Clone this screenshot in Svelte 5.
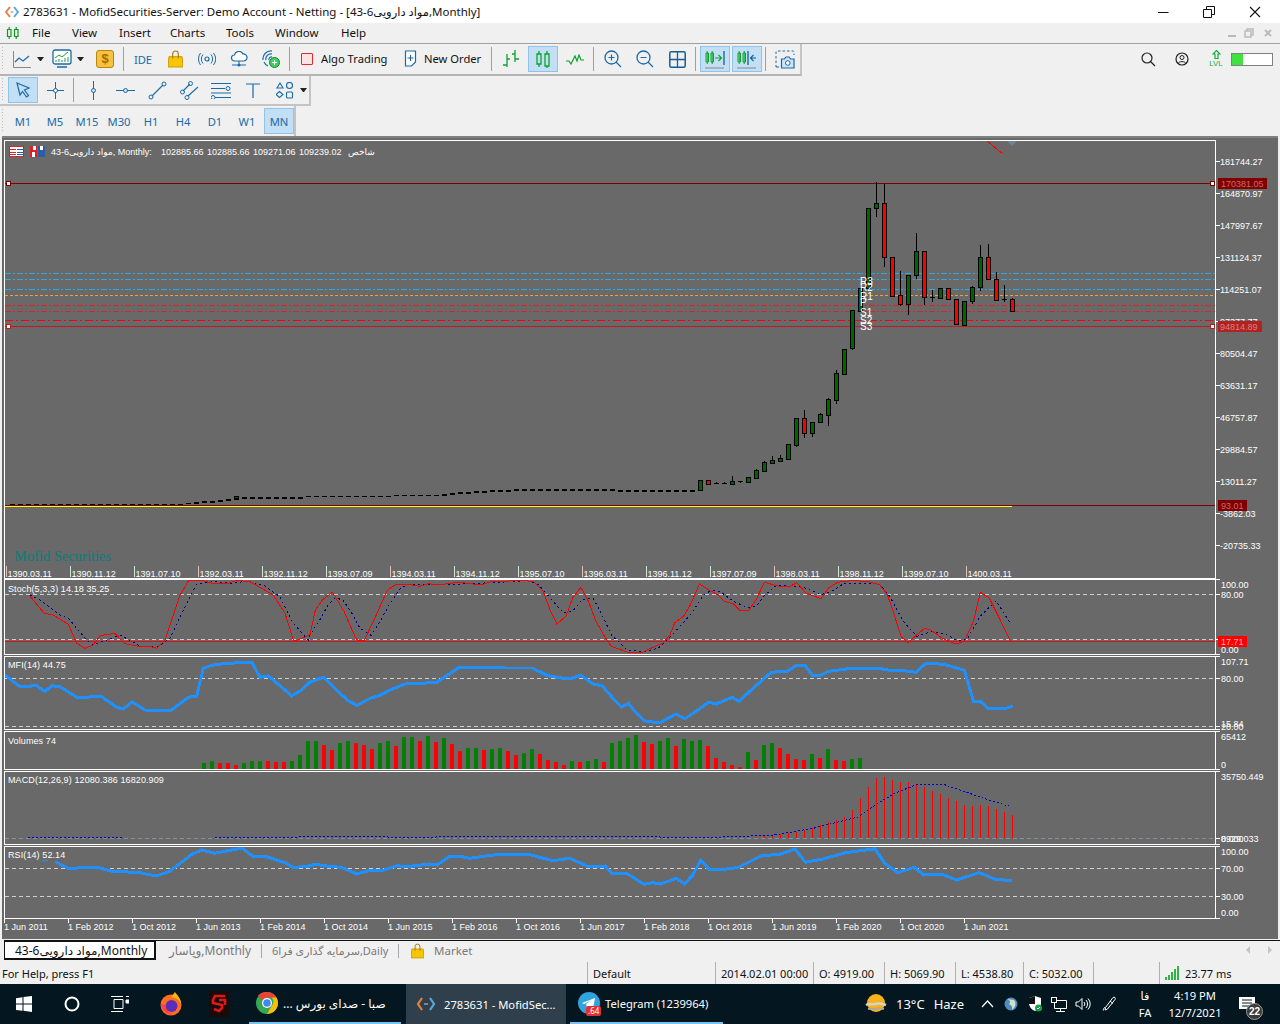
<script>
  const z3 = (a) => a.map(([x, y]) => `${(x / 3).toFixed(1)},${(490 + y / 3).toFixed(1)}`);
  const z11 = (a) => a.map(([x, y]) => `${(310 + x / 2.208).toFixed(1)},${(578 + y / 3).toFixed(1)}`);
  const z12 = (a) => a.map(([x, y]) => `${(x / 1.537).toFixed(1)},${(730 + y / 3).toFixed(1)}`);

  const stochMain = [...z3([[88,316],[133,370],[160,375],[205,403],[230,460],[255,475],[280,465],[300,437],[345,430],[372,460],[420,470],[445,468],[470,475],[495,450],[517,385],[540,316],[565,273],[610,272],[635,280],[680,281],[710,271],[750,275],[820,315],[855,370],[880,450],[890,452],[905,445]]),
    ...z11([[0,170],[12,95],[28,65],[50,43],[75,100],[100,178],[105,187],[120,187],[140,130],[170,38],[190,18],[220,20],[243,25],[260,17],[285,20],[330,13],[360,18],[385,18],[400,11],[430,10],[470,7],[495,12],[515,40],[530,95],[545,138],[565,115],[580,60],[598,28],[615,70],[630,125],[650,175],[665,205],[700,222],[735,222],[765,203],[780,195],[795,170],[805,135],[825,115],[840,80],[860,18],[880,35],[900,50],[915,70],[935,78],[950,98],[968,98],[985,65],[1003,13],[1035,25],[1060,25],[1075,14],[1095,45],[1128,62],[1145,30],[1165,13],[1195,8],[1230,10],[1258,20],[1275,50],[1290,110],[1305,175],[1320,195],[1340,170],[1358,150],[1375,160],[1395,180],[1425,198],[1445,190],[1465,130],[1480,43],[1500,60],[1520,115],[1548,193]])].join(' ');
  const stochSig = [...z3([[90,315],[120,330],[180,375],[205,385],[260,450],[280,465],[360,435],[420,468],[470,472],[510,445],[540,380],[590,282],[640,275],[700,280],[740,273],[790,285],[840,320],[880,400],[925,450]]),
    ...z11([[0,170],[20,130],[40,80],[55,60],[72,65],[90,100],[110,150],[135,172],[155,130],[175,80],[200,30],[215,20],[300,20],[400,14],[480,8],[505,20],[530,60],[560,105],[580,100],[600,65],[625,60],[645,110],[665,170],[700,215],[735,222],[770,210],[800,170],[840,110],[870,50],[885,38],[905,40],[935,70],[965,88],[985,85],[1005,50],[1030,22],[1090,28],[1128,50],[1150,42],[1180,15],[1255,15],[1280,55],[1310,130],[1340,175],[1375,160],[1405,170],[1430,188],[1450,185],[1480,115],[1515,68],[1548,140]])].join(' ');
  const mfi = [...z3([[15,555],[60,590],[110,587],[135,605],[155,587],[180,590],[230,622],[305,620],[350,652],[370,657],[397,636],[435,660],[515,660],[565,622],[590,618],[610,535],[640,525],[680,520],[755,517],[780,562],[805,557],[875,617],[905,600]]),
    ...z11([[0,312],[30,298],[65,345],[85,368],[103,382],[135,360],[155,352],[175,337],[210,318],[245,316],[280,313],[330,268],[430,270],[490,270],[525,293],[555,300],[580,300],[598,292],[625,318],[645,323],[665,355],[688,388],[703,376],[720,405],[738,428],[772,435],[808,408],[828,422],[850,402],[880,373],[897,378],[932,358],[947,370],[975,335],[1018,283],[1055,279],[1075,261],[1092,261],[1110,293],[1128,291],[1145,280],[1190,272],[1260,272],[1280,277],[1310,278],[1338,283],[1360,256],[1400,259],[1445,277],[1465,370],[1480,370],[1498,392],[1535,392],[1552,384]])].join(' ');
  const rsi = z12([[85,395],[105,415],[150,412],[170,423],[215,428],[240,438],[260,425],[280,395],[295,373],[310,360],[330,370],[372,354],[388,378],[410,380],[440,400],[450,412],[470,410],[485,403],[510,410],[525,412],[548,432],[565,423],[590,420],[610,407],[625,410],[660,402],[672,405],[690,380],[705,378],[722,385],[770,372],[810,372],[850,392],[875,385],[905,410],[930,408],[940,430],[965,432],[990,463],[1003,458],[1015,462],[1040,445],[1052,462],[1065,435],[1077,390],[1090,418],[1115,418],[1135,412],[1170,378],[1200,372],[1222,357],[1238,397],[1265,387],[1300,368],[1345,356],[1360,400],[1380,428],[1405,412],[1420,435],[1448,433],[1470,450],[1505,428],[1530,448],[1555,452]]).join(' ');
  const macdSig = z12([[330,322],[590,320],[610,323],[730,319],[1010,320],[1020,322],[1100,322],[1190,315],[1250,295],[1320,260],[1345,225],[1375,190],[1410,163],[1450,163],[1490,190],[1520,210],[1550,228]]).join(' ');

  const candles = [
    [480,490,480,490,'g'],[480,484,480,485,'r'],[483,484,482,484,'d'],[483,484,482,484,'d'],[481,484,476,484,'g'],[481,482,481,483,'d'],
    [477,482,477,482,'g'],[470,478,469,478,'g'],[462,471,461,472,'g'],[460,463,456,463,'g'],[458,461,455,461,'g'],[444,459,444,459,'g'],
    [418,445,418,447,'g'],[418,433,410,438,'r'],[422,433,422,437,'g'],[414,422,413,422,'g'],[399,415,398,426,'g'],[373,400,370,404,'g'],
    [349,374,349,374,'g'],[310,348,310,350,'g'],[288,311,288,311,'g'],[208,288,208,288,'g'],[203,208,182,217,'g'],[203,257,184,267,'r'],
    [257,296,257,296,'r'],[295,304,271,306,'r'],[275,304,275,315,'g'],[251,275,233,279,'g'],[251,297,251,305,'r'],[297,298,290,302,'d'],
    [288,298,288,299,'g'],[288,299,288,299,'r'],[299,324,299,324,'r'],[301,325,301,325,'g'],[287,301,286,304,'g'],[257,287,245,291,'g'],
    [257,279,244,279,'r'],[279,300,272,300,'r'],[299,300,285,302,'d'],[299,311,298,311,'r']
  ].map((c, i) => ({ x: 700 + i * 8, top: c[0], bot: c[1], hi: c[2], lo: c[3], k: c[4] }));

  const curve = [[12,503.5],[185,503.5],[200,501.5],[230,499],[250,496.5],[300,496.5],[440,495],[450,493],[500,490],[520,489],[580,488.5],[620,489.5],[684,490]];
  const dashY = (x) => {
    for (let i = 1; i < curve.length; i++) {
      if (x <= curve[i][0]) {
        const [a, b] = [curve[i - 1], curve[i]];
        return Math.round(a[1] + ((b[1] - a[1]) * (x - a[0])) / (b[0] - a[0]));
      }
    }
    return 490;
  };
  const flat = [];
  for (let x = 12; x <= 692; x += 8) flat.push({ x, y: dashY(x), h: x < 190 || (x > 300 && x < 440) ? 1 : 2 });

  const priceLabels = ['181744.27','164870.97','147997.67','131124.37','114251.07','97377.77','80504.47','63631.17','46757.87','29884.57','13011.27','-3862.03','-20735.33']
    .map((t, i) => ({ t, y: 161 + i * 32 }));
  const paneLabels = [
    ['100.00',584],['80.00',594],['0.00',649],['107.71',661],['80.00',678],['15.84',723],['20.00',726],
    ['65412',736],['0',764],['35750.449',776],['0.000',838],['8929.033',838],['100.00',851],['70.00',868],['30.00',896],['0.00',912]
  ].map(([t, y]) => ({ t, y }));

  const topDates = ['1390.03.11','1390.11.12','1391.07.10','1392.03.11','1392.11.12','1393.07.09','1394.03.11','1394.11.12','1395.07.10','1396.03.11','1396.11.12','1397.07.09','1398.03.11','1398.11.12','1399.07.10','1400.03.11'];
  const botDates = ['1 Jun 2011','1 Feb 2012','1 Oct 2012','1 Jun 2013','1 Feb 2014','1 Oct 2014','1 Jun 2015','1 Feb 2016','1 Oct 2016','1 Jun 2017','1 Feb 2018','1 Oct 2018','1 Jun 2019','1 Feb 2020','1 Oct 2020','1 Jun 2021'];

  const panes = [[140,578],[579,654],[656,729],[731,769],[771,844],[846,918]];
  const ticks = [161,193,225,257,289,321,353,385,417,449,481,513,545,579,594,639,654,656,678,726,729,731,769,771,838,844,846,868,896,918];

  const pivots = [
    [273.5,'#29abe2','6 2 2 2'],[279.5,'#29abe2','6 2 2 2'],[289.5,'#29abe2','6 2 2 2'],
    [295.5,'#e8a33d','3 2'],[305.5,'#e02020','6 2 2 2'],[311.5,'#e02020','6 2 2 2'],[320.5,'#ff0000','8 3 2 3']
  ].map(([y, c, d]) => ({ y, c, d }));
  const pivotText = [['R3',285],['R2',291],['R1',300],['P',306],['S1',316],['S2',324],['S3',330]];

  const volRaw = 'G99 G93 R99 R99 R105 G99 G93 G93 R93 R96 R96 G93 G75 G33 G33 R45 R60 G39 G33 R39 R45 R57 G39 G33 R48 G21 G21 R33 G18 R36 G24 R42 R63 G54 G54 R60 G57 G54 R63 R75 G69 G57 R72 R90 R96 R105 G93 R96 G93 G87 R96 G39 G33 G24 G15 R36 R42 G33 G24 R48 G27 G33 G30 R48 R84 R96 R105 R111 G66 R90 G45 G39 R54 R72 R87 R90 G72 R84 G57 R90 R93 G87 G84';
  const volumes = volRaw.split(' ').map((s, i) => ({ x: 202 + i * 8, up: s[0] === 'G', top: 730 + Number(s.slice(1)) / 3 }));

  const macdTops = [[748,838],[756,837],[764,836],[772,835],[780,834],[788,833],[796,832],[804,830],[812,828],[820,825],[828,822],[836,820],[844,817],[852,810],[860,798],[868,787],[876,778],[884,777],[892,780],[900,782],[908,782],[916,784],[924,787],[932,791],[940,794],[948,798],[956,801],[964,805],[972,806],[980,805],[988,806],[996,809],[1004,812],[1012,815]]
    .map(([x, y]) => ({ x, y }));

  const menus = [['File',40],['View',47],['Insert',51],['Charts',56],['Tools',49],['Window',66],['Help',40]];
  const periods = ['M1','M5','M15','M30','H1','H4','D1','W1'];
  const arabicTab = 'مواد دارویی6-43,Monthly';
</script>

{#snippet bag(w, h)}
  <svg width={w} height={h} viewBox="0 0 16 19"><path d="M1 7h14l1 11H0z" fill="#f7c600" stroke="#c89400"/><path d="M5 9V4a3 3 0 0 1 6 0v5" fill="none" stroke="#a87b00" stroke-width="1.2"/></svg>
{/snippet}

<div class="app">
  <header class="title">
    <svg width="14" height="12" viewBox="0 0 14 12"><path d="M5 1 1 6l4 5" fill="none" stroke="#e8803a" stroke-width="2"/><path d="M9 1l4 5-4 5" fill="none" stroke="#5aa8d8" stroke-width="2"/><path d="M5.5 6h3" stroke="#aab" stroke-width="1.5"/></svg>
    <span class="ttext">2783631 - MofidSecurities-Server: Demo Account - Netting - [مواد دارویی6-43,Monthly]</span>
    <span class="grow"></span>
    <span class="wbtn"><svg width="12" height="12"><path d="M1 6.5h10.5" stroke="#111"/></svg></span>
    <span class="wbtn"><svg width="12" height="12"><path d="M.5 3.5h8v8h-8zM3.5 3V.5h8v8H9" fill="none" stroke="#111"/></svg></span>
    <span class="wbtn"><svg width="12" height="12"><path d="M1 1l10 10M11 1 1 11" stroke="#111" stroke-width="1.1"/></svg></span>
  </header>

  <nav class="menu">
    <svg class="mlogo" width="14" height="14" viewBox="0 0 14 14"><path d="M1.5 3.5h3.5v7H1.5zM8.5 3.5H12v7H8.5zM3.2 1v2.5M3.2 10.500V13M10.200 1v2.500M10.200 10.500V13" fill="none" stroke="#0a9b22" stroke-width="1.2"/></svg>
    {#each menus as [m, w]}<span class="mi" style:width="{w}px">{m}</span>{/each}
    <span class="grow"></span>
    <svg class="mdi" width="46" height="10" viewBox="0 0 46 10"><path d="M1 8h8" stroke="#bbb" stroke-width="2"/><path d="M18 3h6v6h-6zM20 3V1h6v6h-2" fill="none" stroke="#bbb" stroke-width="1.500"/><path d="M38 2l6 6M44 2l-6 6" stroke="#bbb" stroke-width="2"/></svg>
  </nav>

  <div class="toolbars">
    <div class="row r1">
      <span class="grip"></span>
      <span class="b"><svg width="18" height="17" viewBox="0 0 18 17"><path d="M.5 0v16.500H18" fill="none" stroke="#888"/><path d="M2 11l4-4 4 3 6-5" fill="none" stroke="#1a6aa8" stroke-width="1.200"/></svg></span>
      <span class="caret"></span>
      <span class="b ml3"><svg width="20" height="20" viewBox="0 0 20 20"><rect x="1" y="1" width="18" height="14" rx="2" fill="#fff" stroke="#1a6aa8" stroke-width="1.300"/><path d="M3 9l4-3 3 2 6-5" fill="none" stroke="#1a9b3c"/><path d="M4 13v-2M7 13v-3M10 13v-2M13 13V9M16 13V8" stroke="#1a9b3c"/><path d="M5 18h10" stroke="#1a6aa8" stroke-width="1.500"/></svg></span>
      <span class="caret"></span>
      <span class="b ml6"><span class="dollar">$</span></span>
      <span class="sep"></span>
      <span class="b ide">IDE</span>
      <span class="b">{@render bag(15, 18)}</span>
      <span class="b"><svg width="18" height="14" viewBox="0 0 18 14"><circle cx="9" cy="7" r="2" fill="none" stroke="#1a6aa8" stroke-width="1.200"/><path d="M5 2.500a7 7 0 0 0 0 9M13 2.500a7 7 0 0 1 0 9M2.500 1a10 10 0 0 0 0 12M15.500 1a10 10 0 0 1 0 12" fill="none" stroke="#1a6aa8"/></svg></span>
      <span class="b"><svg width="18" height="16" viewBox="0 0 18 16"><path d="M4.500 10a3 3 0 0 1 0-6 4.500 4.500 0 0 1 8.500-1 3.500 3.500 0 0 1 1 7z" fill="#fff" stroke="#1a6aa8" stroke-width="1.200"/><path d="M9 10v3M2 14h14" stroke="#1a6aa8"/><circle cx="9" cy="14" r="1.500" fill="#1a6aa8"/></svg></span>
      <span class="b"><svg width="18" height="18" viewBox="0 0 18 18"><path d="M10 1a8 8 0 0 0-9 9M10 4a5 5 0 0 0-6 6M10 7a2.500 2.500 0 0 0-3 3M2 12a8 8 0 0 0 4 4" fill="none" stroke="#1a6aa8" stroke-width="1.200"/><circle cx="12.500" cy="12.500" r="5" fill="#3ecf5c" stroke="#0a8a2a"/><path d="M12.500 10v5M10 12.500h5" stroke="#fff"/></svg></span>
      <span class="sep"></span>
      <span class="tx algo"><span class="chk"></span>Algo Trading</span>
      <span class="tx neword"><svg width="13" height="17" viewBox="0 0 13 17"><path d="M1.500 1h10v11l-4 4h-6z" fill="#fff" stroke="#1a6aa8" stroke-width="1.200"/><path d="M6.500 5v6M3.500 8h6" stroke="#1a6aa8" stroke-width="1.200"/></svg>New Order</span>
      <span class="sep"></span>
      <span class="b"><svg width="18" height="18" viewBox="0 0 18 18"><path d="M5 4v13M1 15h4M5 9h3M13 0v12M13 4h-3M13 9h4" fill="none" stroke="#0aa52a" stroke-width="1.300"/></svg></span>
      <span class="b on"><svg width="14" height="18" viewBox="0 0 14 18"><path d="M1 4h4v10H1zM9 4h4v12H9zM3 1v3M3 14v3M11 1v3M11 16v2" fill="none" stroke="#0aa52a" stroke-width="1.300"/></svg></span>
      <span class="b"><svg width="18" height="11" viewBox="0 0 18 11"><path d="M0 7h3l2 3 4-8 2 5 2-6 2 5h3" fill="none" stroke="#0aa52a" stroke-width="1.200"/></svg></span>
      <span class="sep"></span>
      <span class="b"><svg width="18" height="18" viewBox="0 0 18 18"><circle cx="7.500" cy="7.500" r="6.500" fill="none" stroke="#1a6aa8" stroke-width="1.300"/><path d="M12 12l5 5M4.500 7.500h6M7.500 4.500v6" stroke="#1a6aa8" stroke-width="1.200"/></svg></span>
      <span class="b"><svg width="18" height="18" viewBox="0 0 18 18"><circle cx="7.500" cy="7.500" r="6.500" fill="none" stroke="#1a6aa8" stroke-width="1.300"/><path d="M12 12l5 5M4.500 7.500h6" stroke="#1a6aa8" stroke-width="1.200"/></svg></span>
      <span class="b"><svg width="17" height="17" viewBox="0 0 17 17"><rect x=".8" y=".8" width="15.400" height="15.400" rx="1.500" fill="none" stroke="#155f96" stroke-width="1.500"/><path d="M8.500 1v15M1 8.500h15" stroke="#155f96" stroke-width="1.300"/></svg></span>
      <span class="sep"></span>
      <span class="b on"><svg width="20" height="19" viewBox="0 0 20 19"><path d="M1 3h2.500v9H1zM6 3h2.500v9H6zM2.200 1v13M7.200 1v13" fill="none" stroke="#0aa52a"/><path d="M10 8h6M13.500 5l3 3-3 3" fill="none" stroke="#0aa52a" stroke-width="1.100"/><path d="M19 1v14" stroke="#155f96" stroke-width="1.300"/><path d="M0 18h19" stroke="#888"/></svg></span>
      <span class="b on"><svg width="20" height="19" viewBox="0 0 20 19"><path d="M1 3h2.500v9H1zM6 3h2.500v9H6zM2.200 1v13M7.200 1v13" fill="none" stroke="#0aa52a"/><path d="M11 1v14" stroke="#155f96" stroke-width="1.300"/><path d="M19 8h-5M16.500 5l-3 3 3 3" fill="none" stroke="#155f96" stroke-width="1.100"/><path d="M0 18h19" stroke="#888"/></svg></span>
      <span class="sep"></span>
      <span class="b"><svg width="20" height="19" viewBox="0 0 20 19"><path d="M1 13V2a1 1 0 0 1 1-1h16a1 1 0 0 1 1 1v3" fill="none" stroke="#1a6aa8" stroke-dasharray="2.500 2"/><path d="M1 15v2h3" fill="none" stroke="#1a6aa8"/><path d="M6.500 9h3l1.500-2h3l1.500 2H19v9H6.500z" fill="#cfe4f5" stroke="#1a6aa8" stroke-width="1.200"/><circle cx="12.800" cy="13" r="2.300" fill="#fff" stroke="#1a6aa8"/></svg></span>
    </div>
    <div class="rightbox">
      <svg width="15" height="15" viewBox="0 0 15 15"><circle cx="6" cy="6" r="5" fill="none" stroke="#222" stroke-width="1.200"/><path d="M9.500 9.500 14 14" stroke="#222" stroke-width="1.300"/></svg>
      <svg class="user" width="14" height="14" viewBox="0 0 14 14"><circle cx="7" cy="7" r="6" fill="none" stroke="#222" stroke-width="1.200"/><circle cx="7" cy="5.500" r="2" fill="none" stroke="#222"/><path d="M3 11.500c1-2.500 7-2.500 8 0" fill="none" stroke="#222"/></svg>
      <span class="lvl">
        <svg width="9" height="9" viewBox="0 0 9 9"><path d="M4.500.5 8 4H6v4.500H3V4H1z" fill="none" stroke="#12b03a" stroke-width="1.200"/></svg>
        <span class="lvlt">LVL</span>
      </span>
      <span class="level"><span class="fill"></span></span>
    </div>

    <div class="row r2">
      <span class="grip"></span>
      <span class="b on ml1"><svg width="15" height="16" viewBox="0 0 15 16"><path d="M1 1l12 5-4.500 2 4 5.500-2 1.500L6.500 9.500 4 13z" fill="none" stroke="#1a6aa8" stroke-width="1.200"/></svg></span>
      <span class="b"><svg width="17" height="17" viewBox="0 0 17 17"><path d="M8.500 0v17M0 8.500h17" stroke="#1a6aa8"/><circle cx="8.500" cy="8.500" r="2" fill="#f0f0f0" stroke="#1a6aa8"/></svg></span>
      <span class="sep"></span>
      <span class="b"><svg width="5" height="19" viewBox="0 0 5 19"><path d="M2.500 0v19" stroke="#1a6aa8"/><circle cx="2.500" cy="9.500" r="2" fill="#cfe4f5" stroke="#1a6aa8"/></svg></span>
      <span class="b"><svg width="19" height="5" viewBox="0 0 19 5"><path d="M0 2.500h19" stroke="#1a6aa8"/><circle cx="9.500" cy="2.500" r="2" fill="#cfe4f5" stroke="#1a6aa8"/></svg></span>
      <span class="b"><svg width="19" height="19" viewBox="0 0 19 19"><path d="M4 15 15 4" stroke="#1a6aa8" stroke-width="1.100"/><circle cx="3" cy="16" r="2" fill="none" stroke="#1a6aa8"/><circle cx="16" cy="3" r="2" fill="none" stroke="#1a6aa8"/></svg></span>
      <span class="b"><svg width="19" height="19" viewBox="0 0 19 19"><path d="M3 10l7-7M8 15l10-9" stroke="#1a6aa8" stroke-width="1.100"/><circle cx="2.500" cy="11" r="2" fill="none" stroke="#1a6aa8"/><circle cx="10.500" cy="2.500" r="2" fill="none" stroke="#1a6aa8"/><circle cx="7" cy="16.500" r="2" fill="none" stroke="#1a6aa8"/></svg></span>
      <span class="b"><svg width="20" height="17" viewBox="0 0 20 17"><path d="M0 1.500h20M0 6.500h14M0 11h20M4 15.500h16" stroke="#1a6aa8" stroke-width="1.200"/><circle cx="17" cy="6.500" r="2" fill="none" stroke="#1a6aa8"/><circle cx="2" cy="15.500" r="2" fill="none" stroke="#1a6aa8"/></svg></span>
      <span class="b"><svg width="14" height="15" viewBox="0 0 14 15"><path d="M0 1h14M7 1v14" stroke="#1a6aa8" stroke-width="1.200"/></svg></span>
      <span class="b"><svg width="18" height="17" viewBox="0 0 18 17"><path d="M4 1l3 5H1zM3.500 9.500l3.500 3-3.500 3L0 12.500z" fill="none" stroke="#1a6aa8" stroke-width="1.100"/><circle cx="13.500" cy="3.500" r="3" fill="none" stroke="#1a6aa8" stroke-width="1.100"/><rect x="10.500" y="10" width="6" height="6" rx="1" fill="none" stroke="#1a6aa8" stroke-width="1.100"/></svg></span>
      <span class="caret"></span>
    </div>

    <div class="row r3">
      <span class="grip"></span>
      <span class="p ml1">{periods[0]}</span>
      {#each periods.slice(1) as p}<span class="p">{p}</span>{/each}
      <span class="p on">MN</span>
    </div>
  </div>

  <main class="chartarea">
    <svg class="chart" width="1276" height="803" viewBox="2 136 1276 803">
      <rect x="2" y="136" width="1276" height="803" fill="#696969"/>
      <path d="M2 136.500h1276" stroke="#808080" stroke-width="2" class="cr"/>

      {#each [594.5,639.5,678.5,726.5,868.5,896.5] as y}
        <path d="M5 {y}H1215" stroke="#cfcfcf" stroke-dasharray="4 3" class="cr"/>
      {/each}
      <path d="M5 838.500H1215" stroke="#7f93a8" stroke-dasharray="4 3" class="cr"/>
      {#each pivots as l}
        <path d="M5 {l.y}H1215" stroke={l.c} stroke-dasharray={l.d} class="cr"/>
      {/each}
      <path d="M5 183.500H1215" stroke="#800000" class="cr"/>
      <path d="M5 326.500H1215" stroke="#b22222" class="cr"/>
      <path d="M5 505.500H1215" stroke="#800000" class="cr"/>
      <path d="M5 506.500H1012" stroke="#ffff00" stroke-width="1.500" class="cr"/>
      <path d="M5 641.500H1215" stroke="#e01010" class="cr"/>

      <polyline points="987,141 1003,154" fill="none" stroke="#ff0000" class="cr"/>
      <path d="M1007 141h10l-5 5z" fill="#6f8297"/>

      {#each flat as d}
        <rect x={d.x - 2} y={d.y} width="5" height={d.h} fill="#000" class="cr"/>
      {/each}
      <rect x="234.500" y="496.500" width="4" height="2" fill="#006400" stroke="#000" class="cr"/>
      {#each candles as c}
        <path d="M{c.x + 0.5} {c.hi}V{c.lo}" stroke="#000" class="cr"/>
        {#if c.k === 'd'}
          <path d="M{c.x - 2} {c.top + 0.5}h5" stroke="#000" stroke-width="1.500" class="cr"/>
        {:else}
          <rect x={c.x - 1.5} y={c.top + 0.5} width="4" height={c.bot - c.top} fill={c.k === 'g' ? '#006400' : '#ff0000'} stroke="#000" class="cr"/>
        {/if}
      {/each}
      {#each pivotText as [t, y]}<text x="860" {y} class="txt pv">{t}</text>{/each}

      <text x="14" y="561" class="brand">Mofid Securities</text>

      <polyline points={stochSig} fill="none" stroke="#00008b" stroke-dasharray="2 3" class="cr"/>
      <polyline points={stochMain} fill="none" stroke="#ff0000" class="cr"/>
      <polyline points={mfi} fill="none" stroke="#1e90ff" stroke-width="3" class="cr"/>
      {#each volumes as v}
        <rect x={v.x} y={v.top} width="4" height={769 - v.top} fill={v.up ? '#008000' : '#ff0000'} class="cr"/>
      {/each}
      {#each macdTops as m}
        <path d="M{m.x + 0.5} {m.y}V838" stroke="#ff0000" class="cr"/>
      {/each}
      <path d="M28 837.500H122" stroke="#0000cd" stroke-dasharray="2 2" class="cr"/>
      <polyline points={macdSig} fill="none" stroke="#0000cd" stroke-dasharray="2 2" class="cr"/>
      <polyline points={rsi} fill="none" stroke="#1e90ff" stroke-width="3" class="cr"/>
      <path d="M42 860.500h6" stroke="#1e90ff" class="cr"/>

      {#each panes as [t, b]}
        <rect x="4.500" y={t + 0.5} width="1211" height={b - t} fill="none" stroke="#fff" class="cr"/>
      {/each}
      {#each ticks as y}
        <path d="M1216 {y + 0.5}h4" stroke="#fff" class="cr"/>
      {/each}

      {#each topDates as d, i}
        <path d="M{6.500 + i * 64} 566V577" stroke={i % 3 === 0 ? '#e0c0c0' : '#c8e8d8'} class="cr"/>
        <text x={7.5 + i * 64} y="576.500" class="txt">{d}</text>
      {/each}
      {#each botDates as d, i}
        <path d="M{4.500 + i * 64} 919v4" stroke="#fff" class="cr"/>
        <text x={4 + i * 64} y="930" class="txt">{d}</text>
      {/each}

      <rect x="9.500" y="146.500" width="14" height="10" fill="#fff" stroke="#d02828" class="cr"/>
      <rect x="17" y="147" width="6" height="9" fill="#fff" class="cr"/>
      <path d="M10 149.500h6M10 152.500h6M10 154.500h6" stroke="#d02828" class="cr"/>
      <path d="M17 149.500h7M17 152.500h7M17 154.500h7M23.500 146v11" stroke="#2a5fa8" class="cr"/>
      <rect x="30" y="146" width="7" height="11" fill="#e02020" class="cr"/>
      <rect x="38" y="146" width="7" height="11" fill="#2a5fa8" class="cr"/>
      <rect x="33" y="146" width="3" height="4" fill="#fff" class="cr"/>
      <rect x="40" y="146" width="3" height="4" fill="#fff" class="cr"/>
      <rect x="32" y="152" width="3" height="5" fill="#fff" class="cr"/>
      <text x="51" y="155" class="txt legend">مواد دارویی6-43, Monthly:</text>
      <text x="161" y="155" class="txt">102885.66</text>
      <text x="207" y="155" class="txt">102885.66</text>
      <text x="253" y="155" class="txt">109271.06</text>
      <text x="299" y="155" class="txt">109239.02</text>
      <text x="348" y="155" class="txt">شاخص</text>
      <text x="8" y="592" class="txt ttl">Stoch(5,3,3) 14.18 35.25</text>
      <text x="8" y="668" class="txt ttl">MFI(14) 44.75</text>
      <text x="8" y="744" class="txt ttl">Volumes 74</text>
      <text x="8" y="783" class="txt ttl">MACD(12,26,9) 12080.386 16820.909</text>
      <text x="8" y="858" class="txt ttl">RSI(14) 52.14</text>

      {#each priceLabels as l}<text x="1220" y={l.y + 3.500} class="txt">{l.t}</text>{/each}
      {#each paneLabels as l}<text x="1221" y={l.y + 3.500} class="txt">{l.t}</text>{/each}

      <rect x="1218" y="178" width="49" height="11" fill="#800000" class="cr"/>
      <text x="1221" y="187" class="txt lb1">170381.05</text>
      <rect x="1218" y="321" width="44" height="11" fill="#b22222" class="cr"/>
      <text x="1220" y="330" class="txt lb2">94814.89</text>
      <rect x="1218" y="500" width="29" height="11" fill="#800000" class="cr"/>
      <text x="1221" y="509" class="txt lb1">93.01</text>
      <rect x="1218" y="636" width="29" height="11" fill="#ff0000" class="cr"/>
      <text x="1221" y="645" class="txt lb3">17.71</text>

      {#each [[8,183],[1212,183],[8,326],[1212,326]] as [x, y]}
        <rect x={x - 1.500} y={y - 1.500} width="4" height="4" fill="#fff" stroke={y === 183 ? '#800000' : '#b22222'} class="cr"/>
      {/each}
    </svg>
  </main>

  <div class="tabs">
    <span class="tab active">{arabicTab}</span>
    <span class="tab t2">وپاسار,Monthly</span>
    <span class="vsep"></span>
    <span class="tab t3">سرمایه گذاری فرا6,Daily</span>
    <span class="vsep"></span>
    <span class="tab t4">{@render bag(13, 16)}<span class="mk">Market</span></span>
    <span class="grow"></span>
    <svg class="arrows" width="26" height="8" viewBox="0 0 26 8"><path d="M4 0v8L0 4zM22 0v8l4-4z" fill="#c4c4c4"/></svg>
  </div>

  <footer class="status">
    <span class="c help">For Help, press F1</span>
    <span class="c def">Default</span>
    <span class="c date">2014.02.01 00:00</span>
    <span class="c o">O: 4919.00</span>
    <span class="c o">H: 5069.90</span>
    <span class="c l">L: 4538.80</span>
    <span class="c cc">C: 5032.00</span>
    <span class="c sp"></span>
    <span class="c net">
      <svg width="15" height="14" viewBox="0 0 15 14"><path d="M1 14v-3M4 14V9M7 14V6M10 14V3M13 14V0" stroke="#2fb344" stroke-width="2"/></svg>
      23.77 ms
    </span>
  </footer>

  <div class="taskbar">
    <span class="ti"><svg width="16" height="16" viewBox="0 0 16 16"><path d="M0 2.200 6.500 1.300v6.200H0zM7.500 1.100 16 0v7.500H7.500zM0 8.500h6.500v6.300L0 13.900zM7.500 8.500H16V16l-8.500-1.200z" fill="#fff"/></svg></span>
    <span class="ti"><svg width="16" height="16"><circle cx="8" cy="8" r="6.500" fill="none" stroke="#fff" stroke-width="2"/></svg></span>
    <span class="ti"><svg width="18" height="16" viewBox="0 0 18 16"><path d="M3 3.500h9v9H3zM0 .500h12M0 15.500h12" fill="none" stroke="#fff"/><path d="M15 .500h3M15 4h3v3h-3z" fill="#fff" stroke="#fff"/></svg></span>
    <span class="ti ff"><svg width="22" height="24" viewBox="0 0 22 24"><circle cx="11" cy="13" r="10.500" fill="#ff6d1f"/><path d="M15 0c2 3 6 6 6 12-2-5-6-6-10-7z" fill="#ffb11a"/><circle cx="11.500" cy="14" r="6" fill="#5c2db8"/><path d="M1 12c1 6 6 11 12 10-5-1-7-4-8-9z" fill="#ff3b4e"/></svg></span>
    <span class="ti"><span class="redapp"><svg width="16" height="22" viewBox="0 0 16 22"><path d="M14 3H4L2 7v3l9 2v3l-3 3-5-2M8 7h6v5" fill="none" stroke="#e01818" stroke-width="2.600"/></svg></span></span>
    <span class="ti tapp chrome">
      <svg width="22" height="22" viewBox="0 0 22 22"><circle cx="11" cy="11" r="11" fill="#34a853"/><path d="M11 0a11 11 0 0 1 9.500 5.500H11a5.500 5.500 0 0 0-5 3L2 3.500A11 11 0 0 1 11 0z" fill="#ea4335"/><path d="M20.500 5.500A11 11 0 0 1 11 22l4.800-8.300a5.500 5.500 0 0 0-.2-8.200z" fill="#fbbc05"/><circle cx="11" cy="11" r="5" fill="#fff"/><circle cx="11" cy="11" r="3.800" fill="#4285f4"/></svg>
      <span class="rtl" dir="rtl">صبا - صدای بورس ...</span>
    </span>
    <span class="ti tapp focus">
      <svg width="20" height="16" viewBox="0 0 20 16"><path d="M6 2 2 8l4 6" fill="none" stroke="#e8803a" stroke-width="2.200"/><path d="M14 2l4 6-4 6" fill="none" stroke="#5aa8d8" stroke-width="2.200"/><path d="M8 8h4" stroke="#8899aa" stroke-width="1.600"/></svg>
      <span>2783631 - MofidSec...</span>
    </span>
    <span class="ti tapp tg">
      <span class="tgicon">
        <svg width="22" height="22" viewBox="0 0 22 22"><circle cx="11" cy="11" r="11" fill="#2fa4de"/><path d="M4 11l13-5-2 11-4-3-2 2-1-4 6-4-8 4z" fill="#fff"/></svg>
        <span class="badge64">.64</span>
      </span>
      <span>Telegram (1239964)</span>
    </span>
    <span class="grow"></span>
    <span class="weather">
      <svg width="22" height="24" viewBox="0 0 22 24"><circle cx="11" cy="11" r="9" fill="#f6b21b"/><path d="M1 13c4-2 6 0 9-1s6-1 11 1" fill="none" stroke="#d8d4c4" stroke-width="2.500"/><path d="M3 17c4-1 6 1 8 0s5-1 8 0" fill="none" stroke="#b0aa98" stroke-width="2"/></svg>
      <span class="tmp">13°C</span><span class="hz">Haze</span>
    </span>
    <span class="tray"><svg width="13" height="8" viewBox="0 0 13 8"><path d="M1 7l5.500-6L12 7" fill="none" stroke="#fff" stroke-width="1.200"/></svg></span>
    <span class="tray"><svg width="14" height="14"><circle cx="7" cy="7" r="6.500" fill="#4f8cc0"/><path d="M3 2c3 1 4 3 2 5 2 1 4 3 3 6 3-2 5-7 2-10" fill="#cfe0c8"/></svg></span>
    <span class="tray"><svg width="14" height="16" viewBox="0 0 14 16"><path d="M7 0l6 2v5c0 4-3 7-6 8-3-1-6-4-6-8V2z" fill="#fff"/><path d="M7 0v8H1V2z" fill="#111"/><circle cx="10.500" cy="12" r="3.500" fill="#18a048"/><path d="M9 12l1 1 2-2" stroke="#fff" fill="none"/></svg></span>
    <span class="tray"><svg width="16" height="15" viewBox="0 0 16 15"><path d="M3.500 3.500h12v8h-12zM9.500 11.500V14M5 14.500h9" fill="none" stroke="#fff"/><rect x=".5" y=".5" width="5" height="5" fill="#05161f" stroke="#fff"/></svg></span>
    <span class="tray"><svg width="16" height="14" viewBox="0 0 16 14"><path d="M1 5h2.500L7 1.500v11L3.500 9H1z" fill="none" stroke="#fff"/><path d="M9 5a3 3 0 0 1 0 4M11 3a6 6 0 0 1 0 8M13 1.500a8 8 0 0 1 0 11" fill="none" stroke="#fff"/></svg></span>
    <span class="tray pen"><svg width="16" height="16" viewBox="0 0 16 16"><path d="M11 1.500c1.500-1 3 .5 2 2L5.500 13 3 14l.5-2.500zM8 5l3 2.500M2 14c-2 1 .5-3 1-3" fill="none" stroke="#fff"/></svg></span>
    <span class="lang"><span>فا</span><span>FA</span></span>
    <span class="clock"><span>4:19 PM</span><span>12/7/2021</span></span>
    <span class="notif">
      <svg width="16" height="14" viewBox="0 0 16 14"><path d="M0 0h16v12H0z" fill="#fff"/><path d="M3 3h10M3 6h10M3 9h7" stroke="#05161f"/></svg>
      <span class="n22">22</span>
    </span>
  </div>
</div>

<style>
  :global(body) { margin: 0; background: #f0f0f0; }
  .app { width: 1280px; height: 1024px; display: flex; flex-direction: column; overflow: hidden; font-family: "Noto Sans", "DejaVu Sans", sans-serif; color: #111; font-size: 11.5px; }
  .grow { flex: 1; }
  .title { height: 23px; flex: none; background: #fff; display: flex; align-items: center; padding-left: 5px; box-sizing: border-box; }
  .ttext { margin-left: 4px; white-space: nowrap; }
  .wbtn { width: 46px; display: flex; justify-content: center; }
  .wbtn:last-child { margin-right: 2px; }
  .menu { height: 20px; flex: none; display: flex; align-items: center; background: #f0f0f0; padding: 0 0 1px 6px; box-sizing: border-box; }
  .mlogo { margin-right: 12px; }
  .mi { flex: none; }
  .mdi { margin-right: 7px; }
  .toolbars { position: relative; height: 93px; flex: none; border-top: 1px solid #a0a0a0; background: #f0f0f0; box-sizing: border-box; font-size: 11.2px; }
  .row { display: flex; align-items: center; box-sizing: border-box; border-bottom: 2px solid #c4c4c4; }
  .r1 { height: 32px; width: 802px; border-right: 2px solid #c4c4c4; border-bottom-color: #b4b4b4; }
  .r2 { height: 30px; width: 311px; border-right: 2px solid #c4c4c4; }
  .r3 { height: 30px; width: 296px; border-right: 2px solid #c4c4c4; border-bottom: 0; }
  .grip { width: 7px; height: 24px; flex: none; background: repeating-linear-gradient(to bottom, #bbb 0 1px, transparent 1px 3px) 2px 0 / 1px 100% no-repeat; }
  .b { width: 30px; height: 26px; flex: none; display: flex; align-items: center; justify-content: center; box-sizing: border-box; border: 1px solid transparent; }
  .b + .b { margin-left: 2px; }
  .on { background: #c2dff5; border: 1px solid #8fc3ec; }
  .ml1 { margin-left: 1px; }
  .b.ml3 { margin-left: 3px; }
  .b.ml6 { margin-left: 6px; }
  .caret { width: 7px; flex: none; height: 0; border-top: 4px solid #222; border-left: 3.500px solid transparent; border-right: 3.500px solid transparent; box-sizing: border-box; }
  .sep { width: 1px; height: 24px; flex: none; background: #a0a0a0; margin: 0 4px 0 3px; }
  .dollar { width: 16px; height: 16px; border: 1px solid #b8860b; border-radius: 3px; background: #f5c242; color: #a86a00; font: bold 13px/16px "Liberation Sans", sans-serif; text-align: center; }
  .ide { color: #1a6aa8; }
  .tx { display: flex; align-items: center; flex: none; box-sizing: border-box; white-space: nowrap; padding-bottom: 1px; }
  .algo { width: 98px; padding-left: 7px; gap: 8px; }
  .neword { width: 96px; padding-left: 12px; gap: 7px; }
  .chk { width: 10px; height: 10px; background: #fde3e3; border: 1px solid #e02b2b; border-radius: 1px; flex: none; }
  .rightbox { position: absolute; top: 0; right: 7px; height: 30px; display: flex; align-items: center; }
  .user { margin-left: 19px; }
  .lvl { margin-left: 20px; width: 14px; display: flex; flex-direction: column; align-items: center; color: #12b03a; }
  .lvlt { font: 8px/8px "Liberation Sans", sans-serif; margin-top: 1px; }
  .level { width: 40px; height: 11px; margin-left: 8px; border: 1px solid #808080; background: #fff; display: block; }
  .fill { display: block; width: 11px; height: 100%; background: #3fe23f; }
  .p { width: 30px; height: 26px; flex: none; margin-right: 2px; display: flex; align-items: center; justify-content: center; box-sizing: border-box; color: #1a6aa8; }
  .chartarea { height: 803px; flex: none; padding: 0 2px; box-sizing: border-box; background: #f0f0f0; }
  .chart { display: block; }
  .cr { shape-rendering: crispEdges; }
  .txt { font: 9px "Liberation Sans", "DejaVu Sans", sans-serif; fill: #fff; }
  .ttl { letter-spacing: .1px; }
  .pv { font-size: 10px; }
  .brand { font: 14.500px "Liberation Serif", serif; fill: #0f7b7b; }
  .lb1 { fill: #c86a6a; }
  .lb2 { fill: #d88080; }
  .lb3 { fill: #ffb0b0; }
  .tabs { height: 23px; flex: none; display: flex; align-items: flex-start; background: #f0f0f0; padding: 2px 8px 0 4px; box-sizing: border-box; position: relative; font-size: 12px; }
  .tabs::before { content: ""; position: absolute; left: 4px; right: 0; top: 1px; height: 1px; background: #111; }
  .tab { display: flex; align-items: center; white-space: nowrap; color: #7a7a7a; height: 19px; box-sizing: border-box; flex: none; }
  .active { position: relative; width: 152px; background: #fff; border: 1px solid #111; border-right-width: 2px; border-bottom-width: 2px; color: #111; padding-left: 10px; }
  .t2 { margin-left: 13px; width: 92px; }
  .t3 { margin-left: 10px; width: 126px; font-size: 11px; }
  .t4 { margin-left: 12px; font-size: 11.5px; }
  .mk { margin-left: 10px; }
  .vsep { width: 1px; height: 14px; margin-top: 3px; background: #a8a8a8; flex: none; }
  .arrows { margin-top: 5px; }
  .status { height: 22px; flex: none; display: flex; background: #f0f0f0; align-items: stretch; font-size: 11px; }
  .c { flex: none; box-sizing: border-box; display: flex; align-items: center; padding-left: 5px; border-left: 1px solid #b0b0b0; white-space: nowrap; }
  .help { width: 587px; border-left: 0; padding-left: 2px; }
  .def { width: 128px; }
  .date { width: 98px; }
  .o { width: 71px; }
  .l { width: 68px; }
  .cc { width: 70px; }
  .sp { width: 66px; }
  .net { gap: 5px; }
  .taskbar { height: 40px; flex: none; background: #04161f; display: flex; align-items: stretch; color: #fff; font-size: 11.2px; }
  .ti { width: 48px; flex: none; display: flex; align-items: center; justify-content: center; box-sizing: border-box; }
  .ff { margin-left: 3px; }
  .redapp { width: 20px; height: 26px; background: #1a0a0a; display: flex; align-items: center; justify-content: center; }
  .ti.tapp { justify-content: flex-start; gap: 5px; padding-left: 7px; white-space: nowrap; }
  .ti.chrome { width: 152px; margin-left: 6px; border-bottom: 2px solid #76c2f0; }
  .rtl { white-space: nowrap; font-size: 12px; }
  .ti.focus { width: 160px; margin-left: 5px; background: #2f404c; padding-left: 10px; gap: 8px; }
  .ti.tg { width: 153px; margin-left: 4px; border-bottom: 2px solid #76c2f0; padding-left: 8px; }
  .tgicon { position: relative; display: flex; }
  .badge64 { position: absolute; left: 8px; top: 14px; background: #e03030; color: #fff; font-size: 8px; line-height: 10px; padding: 0 2px; border-radius: 2px; }
  .weather { display: flex; align-items: center; width: 111px; flex: none; box-sizing: border-box; padding-left: 1px; font-size: 13px; }
  .tmp { margin-left: 9px; }
  .hz { margin-left: 9px; }
  .tray { width: 24px; flex: none; display: flex; align-items: center; justify-content: center; }
  .pen { margin-left: 3px; }
  .lang { width: 24px; margin-left: 11px; flex: none; display: flex; flex-direction: column; align-items: center; justify-content: center; gap: 2px; line-height: 15px; }
  .clock { width: 60px; margin-left: 8px; flex: none; display: flex; flex-direction: column; align-items: center; justify-content: center; gap: 2px; line-height: 15px; white-space: nowrap; }
  .notif { position: relative; width: 32px; flex: none; margin: 0 17px 0 6px; display: flex; align-items: center; justify-content: center; }
  .n22 { position: absolute; left: 15px; top: 19px; width: 17px; height: 17px; border-radius: 50%; background: #3a3a3a; border: 1px solid #999; box-sizing: border-box; font: bold 10px/15px "Liberation Sans", sans-serif; text-align: center; }
</style>
